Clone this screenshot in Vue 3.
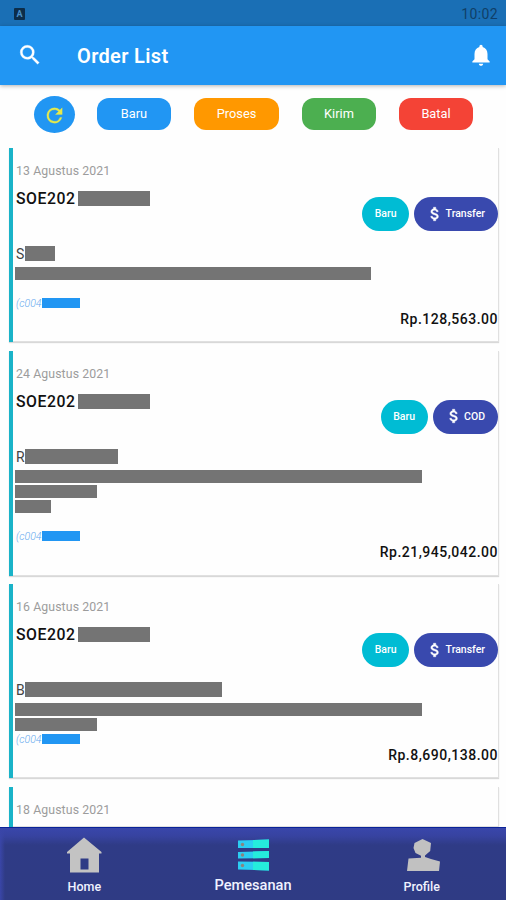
<script setup>
const filters = [
  { label: 'Baru', type: 'new' },
  { label: 'Proses', type: 'process' },
  { label: 'Kirim', type: 'send' },
  { label: 'Batal', type: 'cancel' }
];

// lines: masked address rows, 0 keeps an empty row
const orders = [
  { date: '13 Agustus 2021', initial: 'S', name: 30, lines: [356, 0], payment: 'Transfer', total: 'Rp.128,563.00' },
  { date: '24 Agustus 2021', initial: 'R', name: 93, lines: [407, 82, 36, 0], payment: 'COD', total: 'Rp.21,945,042.00' },
  { date: '16 Agustus 2021', initial: 'B', name: 197, lines: [407, 82], payment: 'Transfer', total: 'Rp.8,690,138.00' },
  { date: '18 Agustus 2021' }
];
</script>

<template>
  <div class="screen">
    <div class="status-bar">
      <span class="status-icon">A</span>
      <span class="clock">10:02</span>
    </div>

    <header class="app-bar">
      <svg class="search-icon" viewBox="0 0 24 24">
        <path d="M15.5 14h-.79l-.28-.27A6.47 6.47 0 0 0 16 9.5 6.5 6.5 0 1 0 9.5 16c1.61 0 3.09-.59 4.23-1.57l.27.28v.79l5 4.99L20.49 19l-4.99-5zm-6 0a4.5 4.5 0 1 1 0-9 4.5 4.5 0 0 1 0 9z" />
      </svg>
      <h1>Order List</h1>
      <svg class="bell-icon" viewBox="0 0 24 24">
        <path d="M12 22c1.1 0 2-.9 2-2h-4c0 1.1.9 2 2 2zm6-6v-5c0-3.07-1.64-5.64-4.5-6.32V4a1.5 1.5 0 0 0-3 0v.68C7.63 5.36 6 7.92 6 11v5l-2 2v1h16v-1l-2-2z" />
      </svg>
    </header>

    <div class="filters">
      <button class="refresh">
        <svg viewBox="0 0 24 24">
          <path d="M17.65 6.35A7.96 7.96 0 0 0 12 4a8 8 0 1 0 7.73 10h-2.08A6 6 0 1 1 12 6c1.66 0 3.14.69 4.22 1.78L13 11h7V4l-2.35 2.35z" />
        </svg>
      </button>
      <button v-for="filter in filters" :key="filter.label" class="filter" :class="filter.type">
        {{ filter.label }}
      </button>
    </div>

    <main class="orders">
      <article v-for="order in orders" :key="order.date" class="order" :class="{ partial: !order.total }">
        <div class="date">{{ order.date }}</div>
        <template v-if="order.total">
          <div class="order-head">
            <div class="number">
              <span class="number-text">SOE202</span>
              <span class="mask number-mask"></span>
            </div>
            <div class="chips">
              <span class="chip status">Baru</span>
              <span class="chip payment">
                <svg viewBox="0 0 24 24">
                  <path d="M11.8 10.9c-2.27-.59-3-1.2-3-2.15 0-1.09 1.01-1.85 2.7-1.85 1.78 0 2.44.85 2.5 2.1h2.21c-.07-1.72-1.12-3.3-3.21-3.81V3h-3v2.16c-1.94.42-3.5 1.68-3.5 3.61 0 2.31 1.91 3.46 4.7 4.13 2.5.6 3 1.48 3 2.41 0 .69-.49 1.79-2.7 1.79-2.06 0-2.87-.92-2.98-2.1h-2.2c.12 2.19 1.76 3.42 3.68 3.83V21h3v-2.15c1.95-.37 3.5-1.5 3.5-3.55 0-2.84-2.43-3.81-4.7-4.4z" />
                </svg>
                {{ order.payment }}
              </span>
            </div>
          </div>
          <div class="customer">
            <span class="initial">{{ order.initial }}</span>
            <span class="mask name-mask" :style="{ width: order.name + 'px' }"></span>
          </div>
          <div class="address">
            <div v-for="(line, i) in order.lines" :key="i" class="address-line">
              <span class="mask" :style="{ width: line + 'px' }"></span>
            </div>
          </div>
          <div class="sales">
            <span class="sales-code">(c004</span>
            <span class="sales-mask"></span>
          </div>
          <div class="total">{{ order.total }}</div>
        </template>
      </article>
    </main>

    <nav class="bottom-nav">
      <a class="nav-item">
        <svg class="nav-icon" viewBox="0 0 36 38">
          <path fill="#c3c3c3" fill-rule="evenodd" d="M18 0.500 35.500 15v1.500H33V35.500H4V16.500H1V15zM14.500 21.500v11h8v-11z" />
        </svg>
        <span>Home</span>
      </a>
      <a class="nav-item active">
        <svg class="nav-icon" viewBox="0 0 36 38">
          <g fill="#2bcdf2">
            <path d="M3 3.500 34 2.500v8.500L3 11z" />
            <path d="M3 15 34 14v7L3 21.500z" />
            <path d="M3 24.500 34 25v8.500L3 32.500z" />
          </g>
          <g fill="#25ecdc">
            <path d="M18 3 34 2.500v8.500H18z" />
            <path d="M18 14.500 34 14v7L18 21.300z" />
            <path d="M18 24.800 34 25v8.500L18 33z" />
          </g>
          <g fill="#8b8580">
            <circle cx="7.500" cy="7.500" r="1.700" />
            <circle cx="7.500" cy="18" r="1.700" />
            <circle cx="7.500" cy="28.500" r="1.700" />
          </g>
        </svg>
        <span>Pemesanan</span>
      </a>
      <a class="nav-item">
        <svg class="nav-icon" viewBox="0 0 36 38">
          <path fill="#c1c1c1" d="M18.500 2 27 6l-.8 8-5.200 4.500V20l6 2 9 2.500-1 9.500H3l1.500-12.500 12.500-.8v-2L11.500 16l-2-5 1-5z" />
        </svg>
        <span>Profile</span>
      </a>
    </nav>
  </div>
</template>

<style>
body {
  background: #fff;
  overflow: hidden;
}
</style>

<style scoped>
.screen {
  display: flex;
  flex-direction: column;
  width: 506px;
  height: 900px;
  overflow: hidden;
  background: #fefefe;
  font-family: Roboto, sans-serif;
}

.status-bar {
  display: flex;
  flex: none;
  align-items: center;
  justify-content: space-between;
  box-sizing: border-box;
  height: 26px;
  padding: 2px 8px 0 14px;
  background: #1a6fb5;
  color: #103f68;
}

.status-icon {
  width: 11px;
  height: 12px;
  border-radius: 1px;
  background: #0c2d4a;
  color: #4a8fc8;
  font-size: 9px;
  font-weight: 700;
  line-height: 12px;
  text-align: center;
}

.clock {
  font-size: 14px;
  letter-spacing: 0.4px;
}

.app-bar {
  display: flex;
  z-index: 1;
  flex: none;
  align-items: center;
  box-sizing: border-box;
  height: 59px;
  padding: 0 12px 1px 17px;
  background: #2196f3;
  box-shadow: 0 1px 4px rgba(0, 0, 0, 0.3);
  color: #fff;
}

.app-bar svg {
  fill: #fff;
}

.search-icon {
  width: 26px;
  height: 26px;
  stroke: #fff;
  stroke-width: 0.3;
}

h1 {
  flex: 1;
  margin: 2px 0 0 34px;
  font-size: 20px;
  font-weight: 600;
  letter-spacing: 0.35px;
}

.bell-icon {
  width: 26px;
  height: 26px;
}

.filters {
  display: flex;
  flex: none;
  align-items: center;
  box-sizing: border-box;
  height: 63px;
  padding: 0 33px 5px 34px;
}

button {
  padding: 0 0 1px;
  border: none;
  color: #fff;
  font-family: inherit;
  cursor: pointer;
}

.refresh {
  display: flex;
  align-items: center;
  justify-content: center;
  width: 41px;
  height: 37px;
  margin-right: 22px;
  border-radius: 50%;
  background: #2196f3;
}

.refresh svg {
  width: 23px;
  height: 23px;
  margin-top: 3px;
  fill: #e6e94c;
  stroke: #e6e94c;
  stroke-width: 0.3;
}

.filter {
  width: 74px;
  height: 32px;
  margin-right: 23px;
  border-radius: 12px;
  font-size: 12.8px;
}

.filter:last-child {
  margin-right: 0;
}

.new {
  background: #2196f3;
}

.process {
  width: 85px;
  background: #ff9800;
}

.send {
  background: #4caf50;
}

.cancel {
  background: #f44336;
}

.orders {
  display: flex;
  flex: 1;
  flex-direction: column;
  gap: 8.5px;
  min-height: 0;
  padding: 0 7px 0 9px;
  overflow: hidden;
}

.order {
  flex: none;
  box-sizing: border-box;
  padding: 14px 1px 14px 2px;
  border-left: 4px solid #1ab3c8;
  background: #fefefe;
  box-shadow: inset -1px -1px 0 #e0e0e0, 0 1px 1px rgba(0, 0, 0, 0.15);
}

.partial {
  flex: 1;
  padding-bottom: 0;
}

.mask {
  display: block;
  height: 13px;
  background: #747474;
}

.date {
  height: 17px;
  padding-left: 1px;
  color: #9c9c9c;
  font-size: 12.3px;
  line-height: 18px;
  letter-spacing: 0.1px;
}

.order-head {
  display: flex;
  justify-content: space-between;
  height: 67px;
}

.number {
  display: flex;
  height: 15px;
  margin-top: 12px;
  padding-left: 1px;
}

.number-text {
  width: 62px;
  color: #111;
  font-size: 15.8px;
  font-weight: 500;
  line-height: 16px;
  letter-spacing: 0.55px;
}

.number-mask {
  width: 72px;
  height: 15px;
}

.chips {
  display: flex;
  gap: 5px;
  margin-top: 18px;
}

.chip {
  display: flex;
  align-items: center;
  justify-content: center;
  box-sizing: border-box;
  height: 34px;
  padding-bottom: 1px;
  border-radius: 17px;
  color: #fff;
  font-size: 10.5px;
  font-weight: 500;
}

.status {
  width: 47px;
  background: #00bcd4;
}

.payment {
  gap: 1.5px;
  padding: 0 13px 1px 12px;
  background: #3949ae;
}

.payment svg {
  width: 18px;
  height: 18px;
  fill: #fff;
  stroke: #fff;
  stroke-width: 0.6;
}

.customer {
  display: flex;
  height: 15px;
  padding-left: 1px;
}

.initial {
  width: 9px;
  color: #444;
  font-size: 14px;
  line-height: 16px;
}

.name-mask {
  height: 15px;
}

.address {
  margin-top: 6px;
}

.address-line {
  height: 15.3px;
}

.sales {
  display: flex;
  align-items: flex-start;
  height: 10px;
}

.sales-code {
  width: 26px;
  height: 11px;
  padding-left: 1px;
  color: #64a9ee;
  font-size: 10.5px;
  font-style: italic;
  font-weight: 300;
  line-height: 11px;
}

.sales-mask {
  width: 38px;
  height: 10px;
  background: #2196f3;
}

.total {
  height: 20.7px;
  color: #111;
  font-size: 14px;
  font-weight: 500;
  line-height: 22px;
  letter-spacing: 0.5px;
  text-align: right;
}

.bottom-nav {
  display: flex;
  z-index: 1;
  flex: none;
  box-sizing: border-box;
  height: 73px;
  border-top: 1px solid #0b2398;
  background: linear-gradient(90deg, #3a46a8, rgba(58, 70, 168, 0) 5px),
    linear-gradient(#3946ab, #3743a0 8px, #2f3b86 17px, #2f3b84);
}

.nav-item {
  display: flex;
  flex: 1;
  flex-direction: column;
  align-items: center;
  color: #f0f2ff;
  font-size: 12.5px;
  font-weight: 500;
}

.nav-icon {
  width: 36px;
  height: 38px;
  margin: 9px 0 4px;
}

.active {
  font-size: 14.6px;
}

.active .nav-icon {
  margin-bottom: 1px;
}
</style>
